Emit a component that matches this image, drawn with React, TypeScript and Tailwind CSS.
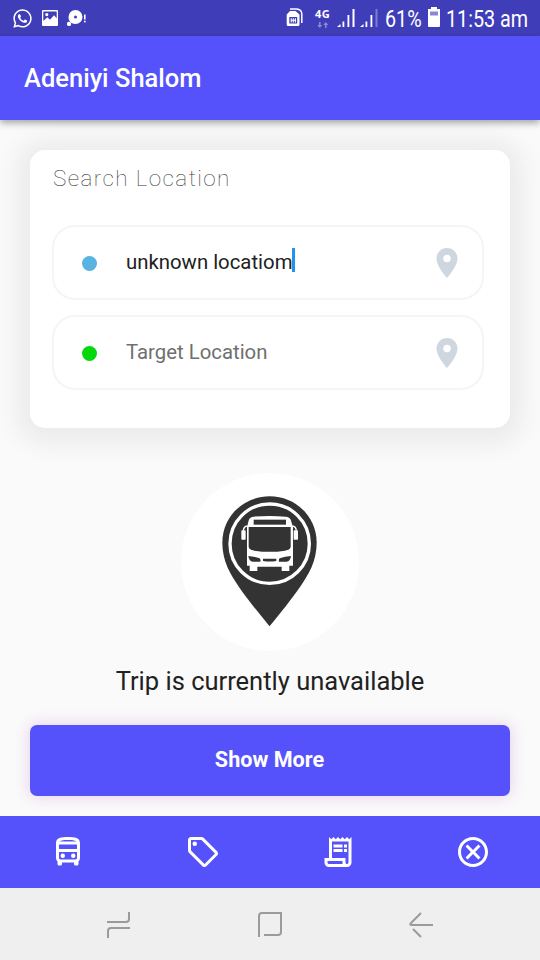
import type { ReactNode } from "react";
import { FaWhatsapp } from "react-icons/fa";
import {
  MdLocationOn,
  MdOutlineCancel,
  MdOutlineDirectionsBus,
  MdOutlineLocalOffer,
  MdOutlineReceiptLong,
} from "react-icons/md";

function Signal({ last }: { last: string }) {
  return (
    <svg viewBox="0 0 18 18" className="h-[18px] w-[18px]" fill="#fff">
      <path d="M0 18 L3.5 15 V18Z" />
      <rect x="5.5" y="12.5" width="1.8" height="5.5" />
      <rect x="10.5" y="6" width="1.8" height="12" />
      <rect x="15.5" y="0" width="2" height="18" fill={last} />
    </svg>
  );
}

function StatusBar() {
  return (
    <div className="flex h-9 shrink-0 items-center bg-[#403db9] text-white">
      <FaWhatsapp className="ml-3 size-[21px] shrink-0" />
      <svg viewBox="0 0 16 16" className="ml-[9px] size-4 shrink-0">
        <path
          fill="#fff"
          fillRule="evenodd"
          d="M1 0H15Q16 0 16 1V15Q16 16 15 16H1Q0 16 0 15V1Q0 0 1 0ZM1.3 1.6V11L5.3 7.3L8 9.8L12 5.3L14.7 8.3V1.6ZM4.8 3A1.6 1.6 0 1 1 4.8 6.2A1.6 1.6 0 0 1 4.8 3Z"
        />
      </svg>
      <svg viewBox="0 0 20 18" className="ml-[9px] h-[18px] w-5 shrink-0">
        <path
          fill="#fff"
          fillRule="evenodd"
          d="M8.5 1A7 7 0 0 1 8.5 15Q6.5 15 4.5 14Q1.5 12 1.5 8A7 7 0 0 1 8.5 1ZM8.5 6.6A1.5 1.5 0 1 0 8.5 9.6A1.5 1.5 0 1 0 8.5 6.6Z"
        />
        <circle cx="2" cy="14.9" r="2.2" fill="#fff" />
        <rect x="17" y="5.5" width="1.6" height="5" fill="#fff" />
        <rect x="17" y="11.7" width="1.6" height="1.7" fill="#fff" />
      </svg>

      <svg viewBox="0 0 18 18" className="mb-0.5 ml-[199px] size-[18px] shrink-0">
        <path d="M4 1H10.5Q15.8 1.5 15.8 6V15" fill="none" stroke="#fff" strokeWidth="1.5" />
        <path
          fill="#fff"
          fillRule="evenodd"
          d="M4 3H9.5L13.5 6.5V16.5Q13.5 18 12 18H2Q.7 18 .7 16.5V6.5ZM3.3 9V15.500H11.2V9Z"
        />
        <path d="M5.2 10.2V14.4M7.3 10.2V14.4M9.4 10.2V14.4M5.2 12.2H9.4" stroke="#fff" strokeWidth="1.1" />
      </svg>
      <div className="ml-[10px] flex w-[17px] flex-col items-center">
        <span className="font-['Noto_Sans',sans-serif] text-[11px] leading-[11px] font-bold tracking-[0.4px]">4G</span>
        <svg viewBox="0 0 12 6" className="mt-[3px] h-1.5 w-3" fill="#8a88d6">
          <path d="M2 0H3.6V3H5.4L2.8 6L.2 3H2ZM8 6H9.6V3H11.4L8.8 0L6.2 3H8Z" />
        </svg>
      </div>
      <div className="ml-1.5 flex shrink-0 gap-[5px]">
        <Signal last="#fff" />
        <Signal last="#7d7bd2" />
      </div>
      <div className="ml-[7px] w-9 shrink-0 pt-0.5">
        <span className="inline-block origin-left scale-x-[0.84] text-[23.5px] leading-9 whitespace-nowrap">61%</span>
      </div>
      <svg viewBox="0 0 12 20" className="mb-0.5 ml-[7px] h-5 w-3 shrink-0">
        <path fill="#fff" d="M3 0H9V2H12V19Q12 20 11 20H1Q0 20 0 19V2H3Z" />
        <rect x="2" y="4.5" width="8" height="4" fill="#8a88d6" />
      </svg>
      <div className="ml-1.5 w-[84px] shrink-0 pt-0.5">
        <span className="inline-block origin-left scale-x-[0.84] text-[23.5px] leading-9 whitespace-nowrap">11:53 am</span>
      </div>
    </div>
  );
}

function LocationField({ dot, children }: { dot: string; children: ReactNode }) {
  return (
    <div className="flex h-[75px] items-center rounded-[23px] border-2 border-[#f5f5f5] pr-[17px] pl-7 text-[20.35px]">
      <span className={`mt-px size-[15px] rounded-full ${dot}`} />
      <div className="ml-[29px] flex flex-1 items-center">{children}</div>
      <MdLocationOn className="size-9 text-[#ced6e0]" />
    </div>
  );
}

function BusPin() {
  return (
    <div className="size-[178px] rounded-full bg-white">
      <svg viewBox="33 24 534 534" className="size-full">
        <path
          fill="#333"
          d="M298.500 94C377 94 440 155 440 233C440 290 414 330 392 363C367 400 332 443 298.500 484C265 443 230 400 205 363C183 330 157 290 157 233C157 155 220 94 298.500 94Z"
        />
        <circle cx="299" cy="236" r="119" fill="none" stroke="#fff" strokeWidth="10" />
        <path
          fill="#fff"
          d="M250 155Q299 151 348 155Q362 157 364 170L369 186V302H358V318H335V305H262V318H239V302H231V186L235 170Q237 157 250 155Z"
        />
        <rect x="251" y="164" width="97" height="15" fill="#333" />
        <path fill="#333" d="M236 186H362V246Q360 254 345 257Q299 264 253 257Q238 254 236 246Z" />
        <path
          fill="#333"
          d="M235 273Q252 274 269 280Q273 284 271 290H248Q237 289 235 273ZM363 273Q346 274 329 280Q325 284 327 290H350Q361 289 363 273ZM279 281H319V288Q299 291 279 288Z"
        />
        <path fill="none" stroke="#fff" strokeWidth="4" d="M232 183Q221 184 220 197M367 183Q378 184 379 197" />
        <rect x="214" y="196" width="13" height="28" rx="2" fill="#fff" />
        <rect x="371" y="196" width="13" height="28" rx="2" fill="#fff" />
      </svg>
    </div>
  );
}

function TabBar() {
  return (
    <nav className="grid h-[72px] shrink-0 grid-cols-4 place-items-center bg-[#5552fc] text-white">
      <MdOutlineDirectionsBus className="size-9" />
      <MdOutlineLocalOffer className="size-9" />
      <MdOutlineReceiptLong className="size-9" />
      <MdOutlineCancel className="size-9" />
    </nav>
  );
}

function SystemBar() {
  return (
    <div className="flex h-[72px] shrink-0 items-center justify-between bg-[#efefef] px-[106px] pt-0.5">
      <svg viewBox="0 0 26 28" className="h-7 w-[26px]" fill="none" stroke="#9b9b9b" strokeWidth="2">
        <path d="M1 11H20Q23 11 23 8V1M24 17H5Q2 17 2 20V27" />
      </svg>
      <svg viewBox="0 0 26 28" className="h-7 w-[26px]" fill="none" stroke="#9b9b9b" strokeWidth="2">
        <path d="M2 26V5Q2 2 5 2H25M24 2V21Q24 24 21 24H7" />
      </svg>
      <svg viewBox="0 0 26 28" className="h-7 w-[26px]" fill="none" stroke="#9b9b9b" strokeWidth="2">
        <path d="M25 14H4Q1 14 3 12L13 2M5 18L13 26" />
      </svg>
    </div>
  );
}

export default function App() {
  return (
    <div className="flex h-[960px] w-[540px] flex-col overflow-hidden bg-[#fafafa] font-[Roboto,sans-serif] text-[#212121]">
      <StatusBar />
      <header className="relative flex h-[84px] shrink-0 items-center bg-[#5552fc] px-6 text-[25.5px] font-medium text-white shadow-[0_3px_7px_rgba(0,0,0,0.35)]">
        Adeniyi Shalom
      </header>
      <main className="flex flex-1 flex-col items-center px-[30px] pt-[30px]">
        <section className="h-[277.5px] w-full rounded-[15px] bg-white pr-[26px] pl-[22px] shadow-[0_3px_24px_14px_rgba(0,0,0,0.06)]">
          <h2 className="h-[75px] pt-[11px] pl-px text-[22.5px] leading-[34px] font-thin tracking-[1.4px] text-[#333]">
            Search Location
          </h2>
          <LocationField dot="bg-[#58b3e0]">
            <span>unknown locatiom</span>
            <span className="-mt-1 h-6 w-[3px] bg-[#2491ea]" />
          </LocationField>
          <div className="h-[15px]" />
          <LocationField dot="bg-[#04d80b]">
            <span className="text-[#6f6f6f]">Target Location</span>
          </LocationField>
        </section>
        <div className="mt-[45.5px]">
          <BusPin />
        </div>
        <p className="mt-[11px] text-[25.5px] leading-[38px]">Trip is currently unavailable</p>
        <button className="mt-[25px] h-[70.5px] w-full rounded-[7px] bg-[#5552fc] pr-px text-[21.6px] font-bold text-white shadow-[0_0_14px_2px_rgba(156,39,176,0.17)]">
          Show More
        </button>
      </main>
      <TabBar />
      <SystemBar />
    </div>
  );
}
